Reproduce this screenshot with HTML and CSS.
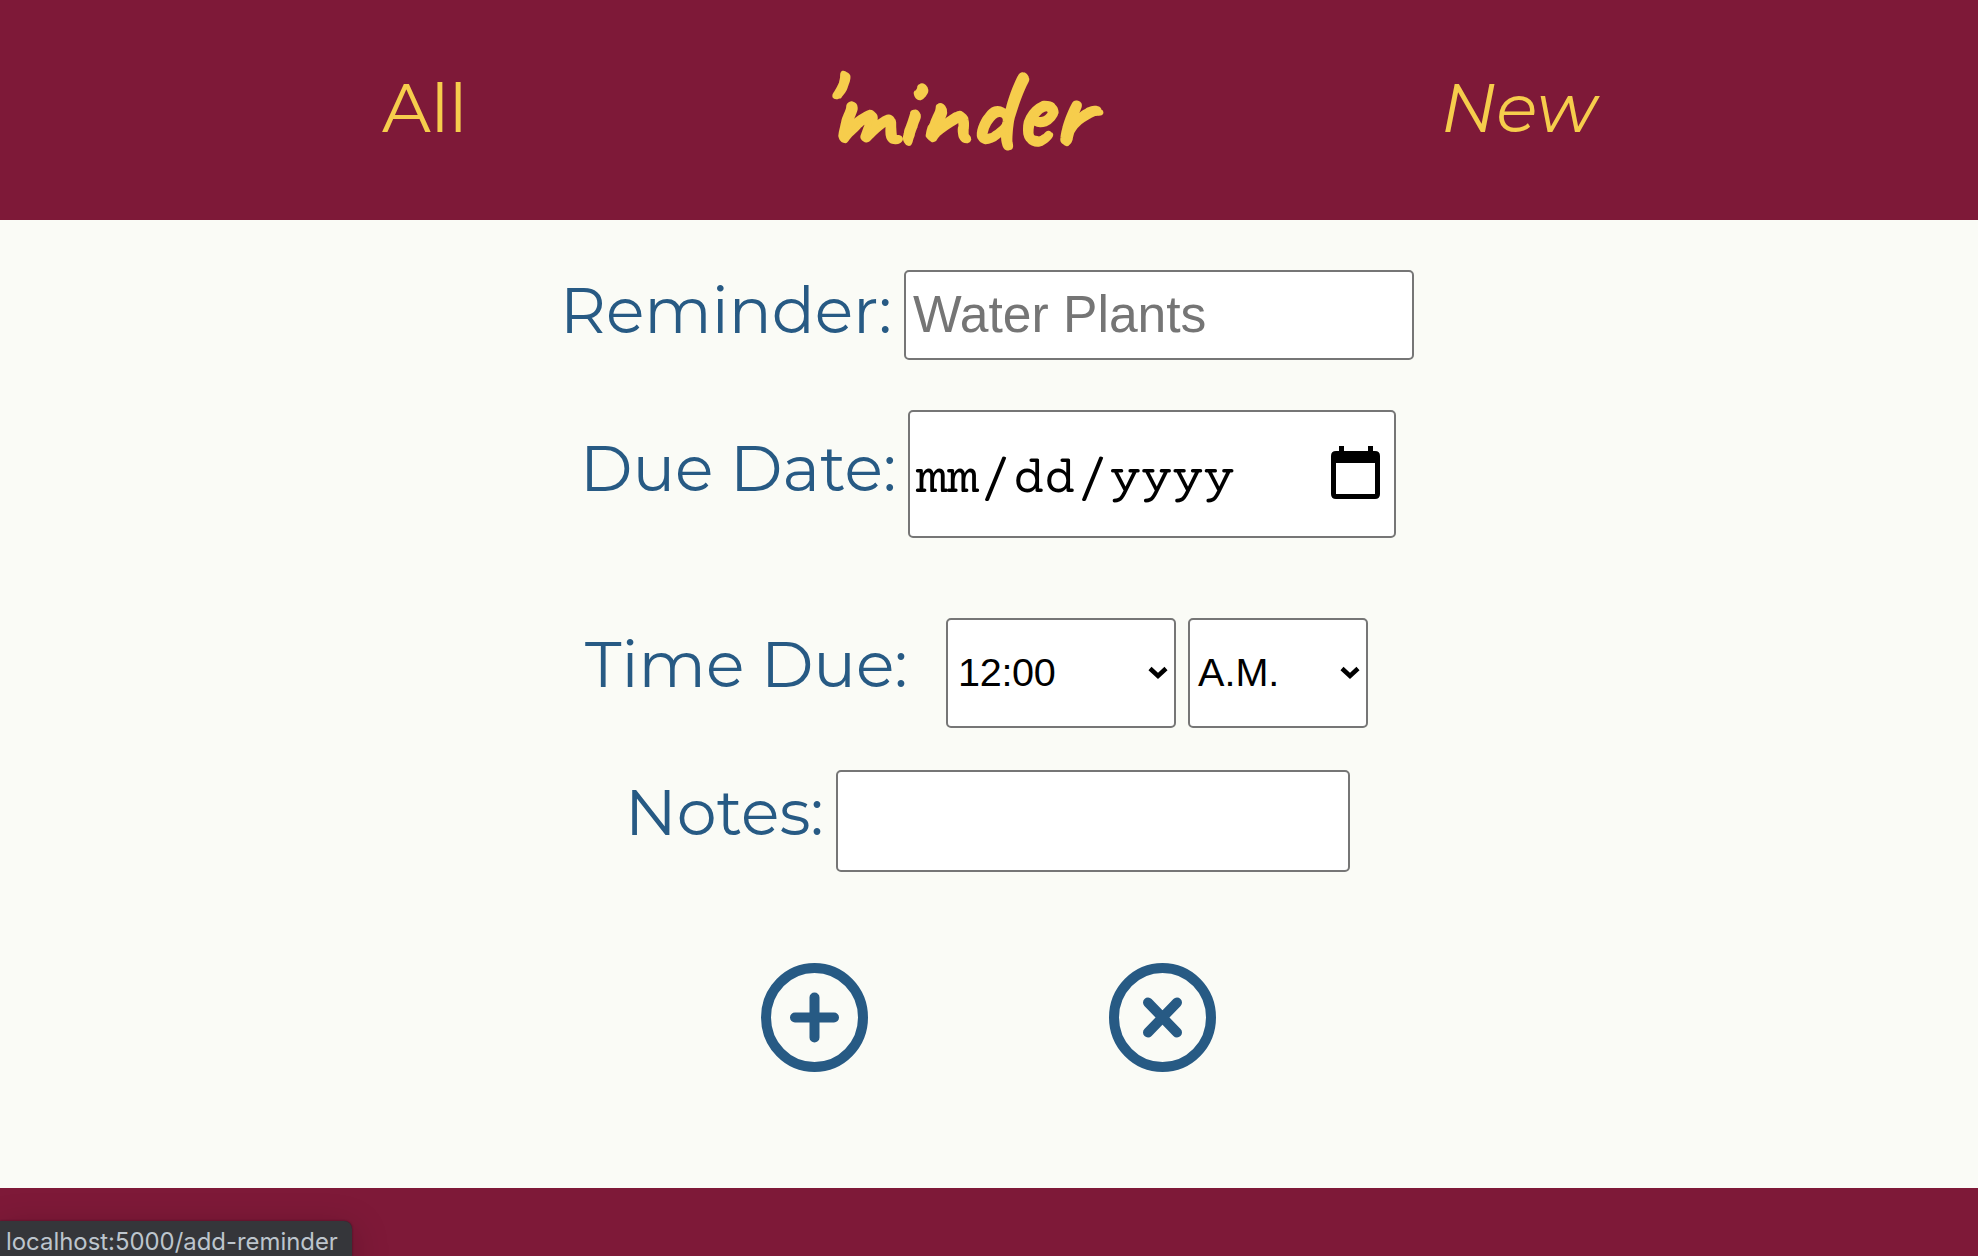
FILE: index.html
```html
<!DOCTYPE html>
<html lang="en">
<head>
<meta charset="utf-8">
<title>'minder</title>
<link rel="stylesheet" href="styles.css">
</head>
<body>
<header class="header">
  <a class="nav nav-all">All</a>
  <h1 class="logo">'minder</h1>
  <a class="nav nav-new">New</a>
</header>
<main class="form">
  <div class="row row-reminder">
    <label class="label">Reminder:</label>
    <input class="field field-reminder" type="text" placeholder="Water Plants">
  </div>
  <div class="row row-date">
    <label class="label">Due Date:</label>
    <div class="field field-date">
      <span class="date-text">mm<span class="slash">/</span>dd<span class="slash">/</span>yyyy</span>
      <svg class="calendar" width="50" height="55" viewBox="0 0 50 55"><path fill-rule="evenodd" d="M8 0h5v5h24V0h5v5h2q5 0 5 5v38q0 5-5 5H5q-5 0-5-5V10q0-5 5-5h3zM5 17v31h39V17z"/></svg>
    </div>
  </div>
  <div class="row row-time">
    <label class="label">Time Due:</label>
    <div class="field select select-hour"><span>12:00</span><svg class="chevron" width="20" height="14" viewBox="0 0 20 14"><path d="M2 2.5l8 7.5 8-7.5"/></svg></div>
    <div class="field select select-half"><span>A.M.</span><svg class="chevron" width="20" height="14" viewBox="0 0 20 14"><path d="M2 2.5l8 7.5 8-7.5"/></svg></div>
  </div>
  <div class="row row-notes">
    <label class="label">Notes:</label>
    <input class="field field-notes" type="text">
  </div>
  <div class="actions">
    <svg class="action" width="108" height="110" viewBox="0 0 108 110"><ellipse cx="53.500" cy="54.500" rx="48.500" ry="49.500"/><path d="M34 54.500h39M53.500 34.500v40"/></svg>
    <svg class="action" width="108" height="110" viewBox="0 0 108 110"><ellipse cx="53.500" cy="54.500" rx="48.500" ry="49.500"/><path d="M39 39.500l29 30M68 39.500l-29 30"/></svg>
  </div>
</main>
<footer class="footer"><div class="status">localhost:5000/add-reminder</div></footer>
</body>
</html>
```
FILE: styles.css
```css
* { box-sizing: border-box; }
body {
  margin: 0;
  height: 1256px;
  overflow: hidden;
  display: flex;
  flex-direction: column;
  background: #fafbf6;
  font-family: Montserrat, Lato, sans-serif;
}
.header {
  height: 220px;
  display: flex;
  align-items: flex-start;
  background: #7e1938;
  color: #f6cd4c;
}
.nav { width: 160px; padding-top: 68px; font-size: 68px; line-height: 80px; }
.nav-all { margin-left: 382px; }
.nav-new { margin-left: 335px; font-style: italic; }
.logo {
  width: 290px;
  margin: 49px 0 0 274px;
  font: 400 112px/120px Caveat, "Caveat Brush", Lato, sans-serif;
  letter-spacing: 1.2px;
  -webkit-text-stroke: 4.4px #f6cd4c;
  white-space: nowrap;
}
.form { height: 968px; display: flex; flex-direction: column; }
.row { display: flex; align-items: flex-start; flex: none; }
.label { font-size: 63.5px; line-height: 78px; color: #275a84; white-space: nowrap; }
.field {
  flex: none;
  border: 2px solid #767676;
  border-radius: 5px;
  background: #fff;
  color: #000;
  font-family: "Liberation Sans", Arial, sans-serif;
  outline: 0;
}
.row-reminder { margin: 50px 0 0 560px; height: 140px; }
.row-reminder .label { width: 344px; padding-top: 2px; }
.field-reminder { width: 510px; height: 90px; padding: 0 7px 2px; font-size: 51.6px; }
.field-reminder::placeholder { color: #757575; }
.row-date { margin-left: 580px; height: 208px; }
.row-date .label { width: 328px; padding-top: 20px; }
.field-date {
  width: 488px;
  height: 128px;
  padding: 34px 13px 0 6px;
  display: flex;
  justify-content: space-between;
}
.date-text { padding-top: 5px; font: 52px/60px "Courier Prime", "Courier New", "Liberation Mono", monospace; }
.slash { margin: 0 1.7px; }
.row-time { margin-left: 585px; height: 152px; }
.row-time .label { width: 361px; padding-top: 8px; }
.select {
  height: 110px;
  padding: 0 6px 2px 10px;
  display: flex;
  align-items: center;
  justify-content: space-between;
  font-size: 39.6px;
}
.select-hour { width: 230px; letter-spacing: -.3px; }
.select-half { width: 180px; margin-left: 12px; padding-left: 8px; }
.chevron { fill: none; stroke: #000; stroke-width: 4.500; position: relative; top: 1px; }
.row-notes { margin-left: 625px; height: 102px; }
.row-notes .label { width: 211px; padding-top: 4px; }
.field-notes { width: 514px; height: 102px; font-size: 52px; }
.actions { display: flex; gap: 240px; margin: 91px 0 0 761px; }
.action { fill: none; stroke: #275a84; stroke-width: 10; stroke-linecap: round; }
.footer { height: 68px; padding-top: 33px; background: #7e1938; }
.status {
  width: 352px;
  height: 36px;
  padding: 5px 0 0 6px;
  background: #35363a;
  border-radius: 0 8px 0 0;
  box-shadow: 0 0 2px #35121e, 0 10px 36px rgba(0, 0, 0, .25);
  color: #bdc5cd;
  font: 23.9px/32px Inter, sans-serif;
  white-space: nowrap;
}
```
